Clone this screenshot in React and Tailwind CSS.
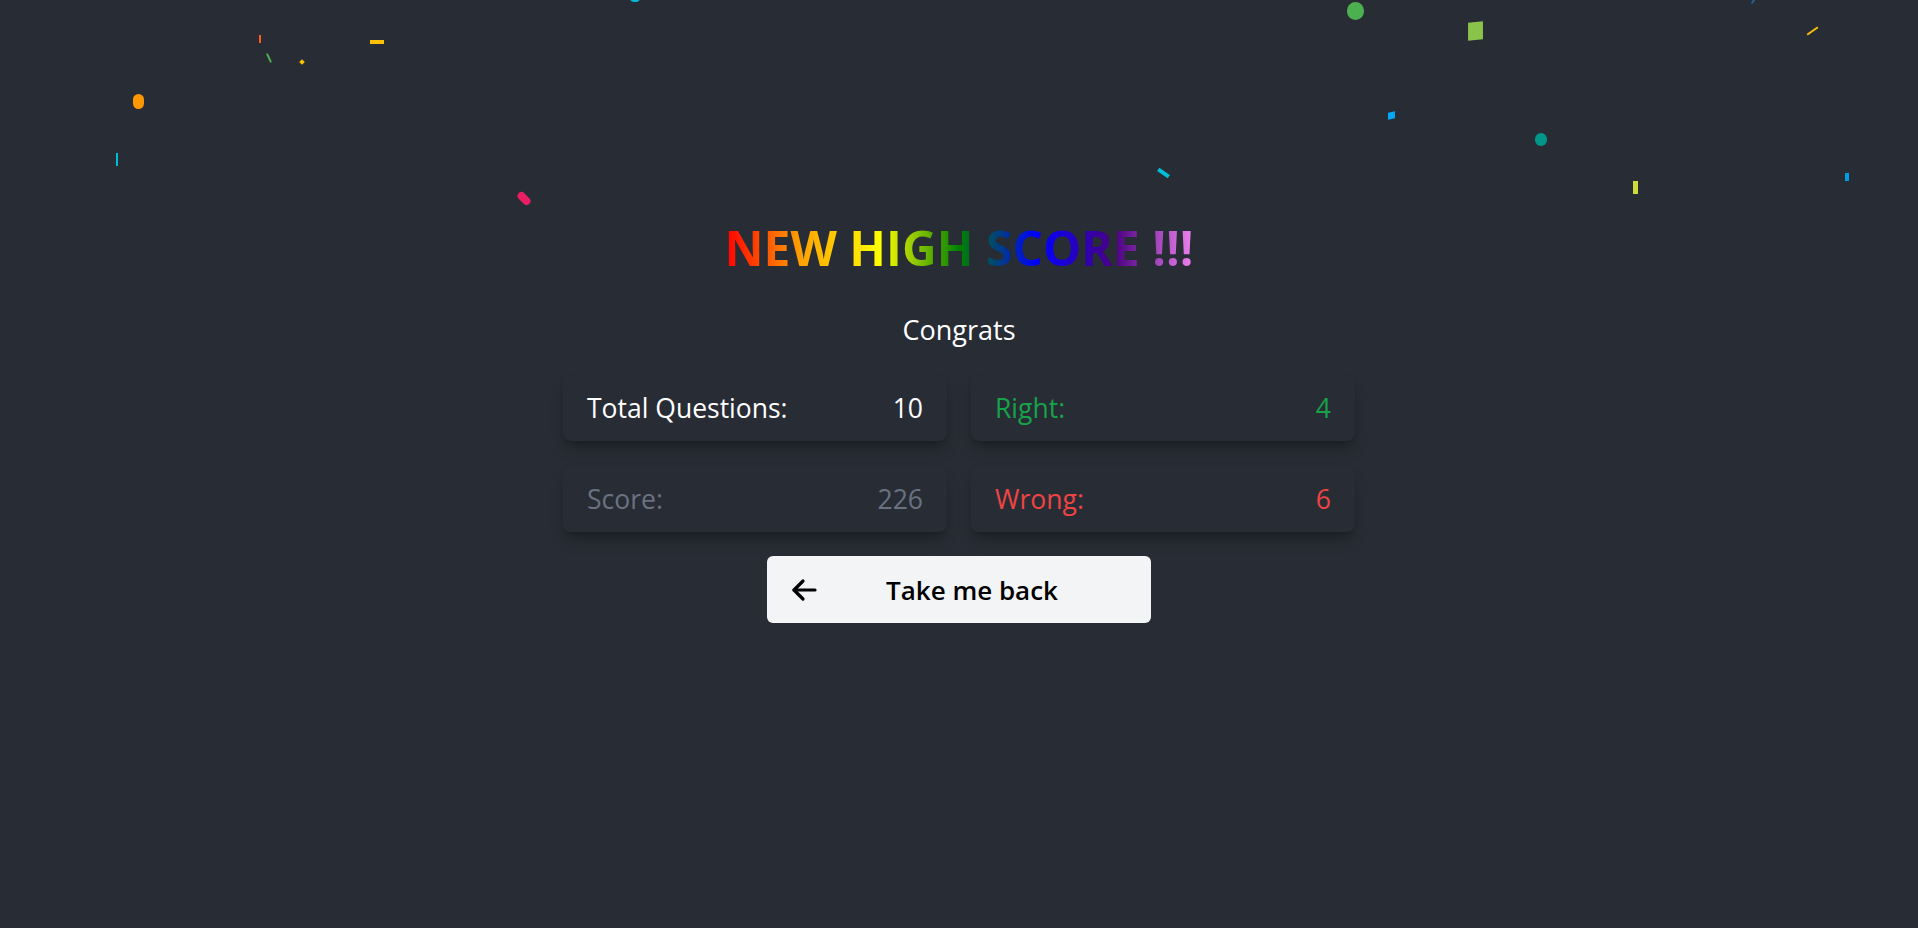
import { useState } from "react";

// confetti bits frozen where they were in the shot
const confetti = [
  "left-[630px] top-[-6px] w-[10px] h-[8px] rounded-full bg-[#00bcd4]",
  "left-[259px] top-[35px] w-[2px] h-[8px] bg-[#ff5722]",
  "left-[268px] top-[53px] w-[2px] h-[10px] -rotate-[25deg] rounded-full bg-[#4caf50]",
  "left-[300px] top-[60px] w-[4px] h-[4px] rotate-45 bg-[#ffc107]",
  "left-[370px] top-[40px] w-[14px] h-[4px] bg-[#ffc107]",
  "left-[133px] top-[94px] w-[11px] h-[15px] rounded-full bg-[#ff9800]",
  "left-[116px] top-[153px] w-[2px] h-[13px] bg-[#00bcd4]",
  "left-[520px] top-[191px] w-[8px] h-[15px] -rotate-45 rounded-full bg-[#e91e63]",
  "left-[1347px] top-[2px] w-[17px] h-[18px] rounded-full bg-[#4caf50]",
  "left-[1468px] top-[22px] w-[15px] h-[18px] -rotate-6 -skew-x-6 bg-[#8bc34a]",
  "left-[1388px] top-[112px] w-[7px] h-[7px] -skew-y-12 bg-[#03a9f4]",
  "left-[1535px] top-[133px] w-[12px] h-[13px] rounded-full bg-[#009688]",
  "left-[1633px] top-[181px] w-[5px] h-[13px] bg-[#cddc39]",
  "left-[1845px] top-[173px] w-[4px] h-[8px] bg-[#039be5]",
  "left-[1806px] top-[30px] w-[13px] h-[2px] -rotate-[35deg] bg-[#ffc107]",
  "left-[1752px] top-[-1px] w-[2px] h-[5px] rotate-[35deg] bg-[#2196f3] opacity-50",
  "left-[1157px] top-[171px] w-[13px] h-[4px] rotate-[35deg] bg-[#00bcd4]",
];

function StatCard({ label, value, color }) {
  return (
    <div className={`h-[66px] px-6 flex items-center justify-between rounded-lg bg-[#282c34] shadow-lg shadow-black/25 text-[26.5px] leading-none ${color}`}>
      <span>{label}</span>
      <span>{value}</span>
    </div>
  );
}

export default function App() {
  const [stats] = useState({ total: 10, right: 4, wrong: 6, score: 226 });

  return (
    <div className="relative min-h-screen overflow-hidden bg-[#282c34] font-['Open_Sans',sans-serif]">
      {/* confetti */}
      <div className="pointer-events-none absolute inset-0">
        {confetti.map((c, i) => (
          <div key={i} className={`absolute ${c}`} />
        ))}
      </div>

      <div className="relative flex flex-col items-center pt-[224px]">
        <h1 className="text-[48px] leading-none font-bold bg-[linear-gradient(to_right,red,orange,yellow,green,blue,indigo,violet)] bg-clip-text text-transparent">
          NEW HIGH SCORE !!!
        </h1>

        <p className="mt-[44px] text-[27px] leading-none text-white">Congrats</p>

        <div className="mt-8 w-[792px] grid grid-cols-2 gap-x-6 gap-y-[25px]">
          <StatCard label="Total Questions:" value={stats.total} color="text-white" />
          <StatCard label="Right:" value={stats.right} color="text-[#16a34a]" />
          <StatCard label="Score:" value={stats.score} color="text-gray-500" />
          <StatCard label="Wrong:" value={stats.wrong} color="text-[#ef4444]" />
        </div>

        <button className="mt-6 w-[384px] h-[67px] px-6 flex items-center rounded-md bg-gray-100 text-black">
          <svg width="26" height="24" viewBox="0 0 26 24" fill="none" stroke="currentColor" strokeWidth="3.2" strokeLinecap="round" strokeLinejoin="round">
            <path d="M24 12H3" />
            <path d="M12 3 3 12l9 9" />
          </svg>
          <span className="flex-1 text-center text-[26px] leading-none font-semibold">Take me back</span>
        </button>
      </div>
    </div>
  );
}
